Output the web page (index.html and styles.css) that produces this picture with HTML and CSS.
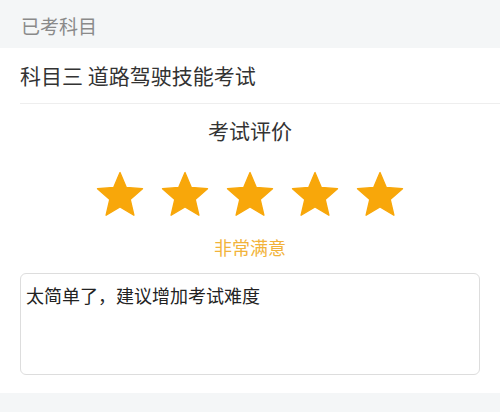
FILE: index.html
```html
<!DOCTYPE html>
<html lang="zh-CN">
<head>
  <meta charset="UTF-8">
  <meta name="viewport" content="width=device-width, initial-scale=1.0">
  <title>考试评价</title>
  <link rel="stylesheet" href="styles.css">
</head>
<body>
  <div class="section-head">已考科目</div>

  <div class="card">
    <div class="subject">科目三 道路驾驶技能考试</div>

    <div class="rate">
      <div class="rate-title">考试评价</div>
      <div class="stars">
        <svg class="star" viewBox="0 0 24 24"><path d="M12 17.27L18.18 21l-1.64-7.03L22 9.24l-7.19-.61L12 2 9.19 8.63 2 9.24l5.46 4.73L5.82 21z"/></svg>
        <svg class="star" viewBox="0 0 24 24"><path d="M12 17.27L18.18 21l-1.64-7.03L22 9.24l-7.19-.61L12 2 9.19 8.63 2 9.24l5.46 4.73L5.82 21z"/></svg>
        <svg class="star" viewBox="0 0 24 24"><path d="M12 17.27L18.18 21l-1.64-7.03L22 9.24l-7.19-.61L12 2 9.19 8.63 2 9.24l5.46 4.73L5.82 21z"/></svg>
        <svg class="star" viewBox="0 0 24 24"><path d="M12 17.27L18.18 21l-1.64-7.03L22 9.24l-7.19-.61L12 2 9.19 8.63 2 9.24l5.46 4.73L5.82 21z"/></svg>
        <svg class="star" viewBox="0 0 24 24"><path d="M12 17.27L18.18 21l-1.64-7.03L22 9.24l-7.19-.61L12 2 9.19 8.63 2 9.24l5.46 4.73L5.82 21z"/></svg>
      </div>
      <div class="rate-text">非常满意</div>
    </div>

    <div class="comment">
      <textarea class="comment-input">太简单了，建议增加考试难度</textarea>
    </div>
  </div>

  <div class="page-foot"></div>
</body>
</html>
```

FILE: styles.css
```css
body {
  margin: 0;
  background: #f4f6f7;
  font-family: "Noto Sans CJK SC", "Noto Sans", sans-serif;
}
.section-head {
  height: 48px;
  padding: 2px 0 0 21px;
  box-sizing: border-box;
  line-height: 48px;
  font-size: 19px;
  color: #8a8a8a;
  background: #f4f6f7;
}
.card {
  background: #fff;
  padding-bottom: 18px;
}
.subject {
  margin-left: 20px;
  height: 56px;
  line-height: 55px;
  box-sizing: border-box;
  border-bottom: 1px solid #eeeeee;
  font-size: 21px;
  color: #333;
}
.rate {
  text-align: center;
}
.rate-title {
  margin-top: 11px;
  line-height: 30px;
  font-size: 21px;
  color: #333;
}
.stars {
  display: flex;
  justify-content: center;
  gap: 11px;
  margin-top: 23px;
}
.star {
  width: 54px;
  height: 54px;
  fill: #f8a70a;
  stroke: #f8a70a;
  stroke-width: 0.6;
  stroke-linejoin: round;
}
.rate-text {
  margin-top: 13px;
  line-height: 24px;
  font-size: 18px;
  color: #f2b33a;
}
.comment {
  margin: 14px 20px 0;
}
.comment-input {
  display: block;
  width: 100%;
  height: 102px;
  box-sizing: border-box;
  padding: 8px 5px;
  border: 1px solid #dddddd;
  border-radius: 6px;
  resize: none;
  font-family: "Noto Sans CJK SC", sans-serif;
  font-size: 18px;
  line-height: 26px;
  color: #222;
}
.page-foot {
  height: 19px;
}
```
